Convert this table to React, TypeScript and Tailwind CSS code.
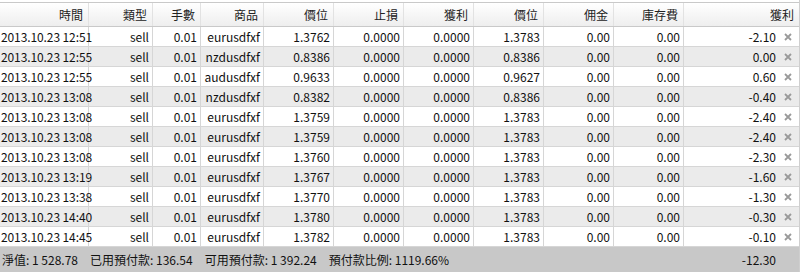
import React from "react"

const headers = ["時間", "類型", "手數", "商品", "價位", "止損", "獲利", "價位", "佣金", "庫存費", "獲利"]

const rows = [
	["2013.10.23 12:51", "sell", "0.01", "eurusdfxf", "1.3762", "0.0000", "0.0000", "1.3783", "0.00", "0.00", "-2.10"],
	["2013.10.23 12:55", "sell", "0.01", "nzdusdfxf", "0.8386", "0.0000", "0.0000", "0.8386", "0.00", "0.00", "0.00"],
	["2013.10.23 12:55", "sell", "0.01", "audusdfxf", "0.9633", "0.0000", "0.0000", "0.9627", "0.00", "0.00", "0.60"],
	["2013.10.23 13:08", "sell", "0.01", "nzdusdfxf", "0.8382", "0.0000", "0.0000", "0.8386", "0.00", "0.00", "-0.40"],
	["2013.10.23 13:08", "sell", "0.01", "eurusdfxf", "1.3759", "0.0000", "0.0000", "1.3783", "0.00", "0.00", "-2.40"],
	["2013.10.23 13:08", "sell", "0.01", "eurusdfxf", "1.3759", "0.0000", "0.0000", "1.3783", "0.00", "0.00", "-2.40"],
	["2013.10.23 13:08", "sell", "0.01", "eurusdfxf", "1.3760", "0.0000", "0.0000", "1.3783", "0.00", "0.00", "-2.30"],
	["2013.10.23 13:19", "sell", "0.01", "eurusdfxf", "1.3767", "0.0000", "0.0000", "1.3783", "0.00", "0.00", "-1.60"],
	["2013.10.23 13:38", "sell", "0.01", "eurusdfxf", "1.3770", "0.0000", "0.0000", "1.3783", "0.00", "0.00", "-1.30"],
	["2013.10.23 14:40", "sell", "0.01", "eurusdfxf", "1.3780", "0.0000", "0.0000", "1.3783", "0.00", "0.00", "-0.30"],
	["2013.10.23 14:45", "sell", "0.01", "eurusdfxf", "1.3782", "0.0000", "0.0000", "1.3783", "0.00", "0.00", "-0.10"],
]

const cols = "grid grid-cols-[89px_64px_48px_63px_70px_70px_70px_70px_70px_70px_1fr]"

function CloseIcon() {
	return (
		<svg width="8" height="8" viewBox="0 0 8 8" className="text-[#9a9a9a]">
			<path d="M1 1L7 7M7 1L1 7" stroke="currentColor" strokeWidth="1.8" />
		</svg>
	)
}

export default function App() {
	return (
		<div
			className="w-[800px] h-[272px] bg-white text-[12px] leading-none text-[#111] border-r border-[#cfcfcf] overflow-hidden whitespace-nowrap"
			style={{ fontFamily: '"Noto Sans CJK TC", "Open Sans", sans-serif' }}
		>
			<div className="pt-[2px]">
				<div className={`${cols} h-[25px] border-t border-b border-[#c9c9c9] bg-gradient-to-b from-white to-[#eeeeee] text-[#222]`}>
					{headers.map((h, i) => (
						<div
							key={i}
							className={`flex items-center justify-end pr-[5px] ${i < headers.length - 1 ? "border-r border-[#e2e2e2]" : ""}`}
						>
							{h}
						</div>
					))}
				</div>
			</div>

			{rows.map((r, ri) => (
				<div
					key={ri}
					className={`${cols} h-[20px] border-b border-[#d6d6d6] ${ri % 2 === 1 ? "bg-[#ebebeb]" : "bg-white"}`}
				>
					{r.map((c, ci) =>
						ci === r.length - 1 ? (
							<div key={ci} className="flex items-center justify-end">
								<span>{c}</span>
								<span className="w-[23px] flex justify-center">
									<CloseIcon />
								</span>
							</div>
						) : (
							<div
								key={ci}
								className={`flex items-center border-r border-[#d6d6d6] ${ci === 0 ? "pl-[1px] tracking-[-0.1px]" : "justify-end pr-[3px]"}`}
							>
								{c}
							</div>
						)
					)}
				</div>
			))}

			<div className="h-[25px] bg-[#c8c8c8] flex items-center justify-between pl-[2px] pr-[23px]">
				<div className="flex gap-[12px]">
					<span>淨值: 1 528.78</span>
					<span>已用預付款: 136.54</span>
					<span>可用預付款: 1 392.24</span>
					<span>預付款比例: 1119.66%</span>
				</div>
				<span>-12.30</span>
			</div>
		</div>
	)
}
